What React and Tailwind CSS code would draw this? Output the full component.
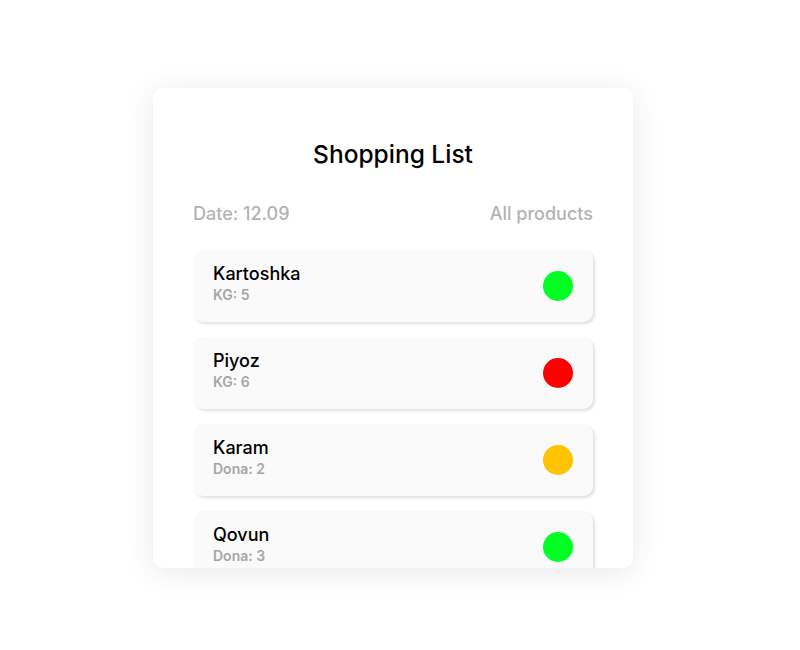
const items = [
  { name: "Kartoshka", unit: "KG", qty: 5, color: "bg-[#00ff22]" },
  { name: "Piyoz", unit: "KG", qty: 6, color: "bg-[#ff0000]" },
  { name: "Karam", unit: "Dona", qty: 2, color: "bg-[#ffc300]" },
  { name: "Qovun", unit: "Dona", qty: 3, color: "bg-[#00ff22]" },
];

function Item({ name, unit, qty, color }) {
  return (
    <div className="flex h-[72px] shrink-0 items-center justify-between rounded-[10px] bg-[#fafafa] px-5 shadow-[2px_2px_3px_rgba(0,0,0,0.12)]">
      <div className="flex flex-col pb-[6px]">
        <span className="text-lg leading-6 font-medium text-black">{name}</span>
        <span className="text-sm leading-[18px] font-semibold text-[#a6a6a6]">
          {unit}: {qty}
        </span>
      </div>
      <div className={`h-[30px] w-[30px] rounded-full ${color}`} />
    </div>
  );
}

export default function App() {
  return (
    <div
      className="flex min-h-[650px] w-full justify-center bg-white pt-[88px] pr-[14px]"
      style={{ fontFamily: "Inter, 'Noto Sans', sans-serif" }}
    >
      <div className="h-[480px] w-[480px] overflow-hidden rounded-[10px] bg-white px-10 pt-[50px] shadow-[0_4px_30px_rgba(0,0,0,0.09)]">
        <h1 className="text-center text-[24.5px] leading-8 font-medium text-black">
          Shopping List
        </h1>
        <div className="mt-[30px] flex items-center justify-between text-lg leading-7 font-medium text-[#b3b3b3]">
          <span>Date: 12.09</span>
          <span>All products</span>
        </div>
        <div className="mt-[22px] flex flex-col gap-[15px]">
          {items.map((it) => (
            <Item key={it.name} {...it} />
          ))}
        </div>
      </div>
    </div>
  );
}
